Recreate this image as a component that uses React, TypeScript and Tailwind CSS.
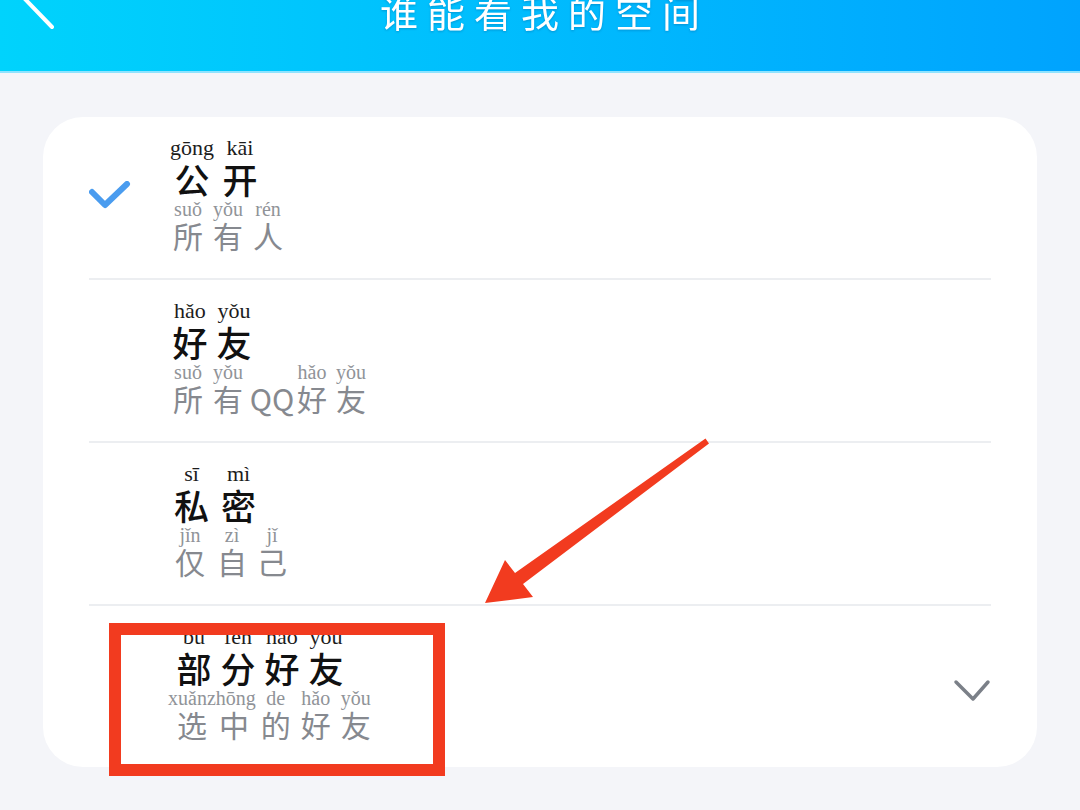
type Char = { c: string; w: string };
type Cell = { py?: string; chars: Char[] };
type Row = { main: Cell[]; sub: Cell[]; mainShift?: string; checked?: boolean; expand?: boolean };

const PY = "font-['Liberation_Serif',serif]";
const HZ = "font-['Noto_Sans_CJK_SC','Noto_Sans',sans-serif]";

const rows: Row[] = [
  {
    checked: true,
    main: [
      { py: "gōng", chars: [{ c: "公", w: "w-[48px]" }] },
      { py: "kāi", chars: [{ c: "开", w: "w-[48px]" }] },
    ],
    sub: [
      { py: "suǒ", chars: [{ c: "所", w: "w-[40px]" }] },
      { py: "yǒu", chars: [{ c: "有", w: "w-[40px]" }] },
      { py: "rén", chars: [{ c: "人", w: "w-[40px]" }] },
    ],
  },
  {
    main: [
      { py: "hǎo", chars: [{ c: "好", w: "w-[44px]" }] },
      { py: "yǒu", chars: [{ c: "友", w: "w-[44px]" }] },
    ],
    sub: [
      { py: "suǒ", chars: [{ c: "所", w: "w-[40px]" }] },
      { py: "yǒu", chars: [{ c: "有", w: "w-[40px]" }] },
      { chars: [{ c: "QQ", w: "w-[48px]" }] },
      { py: "hǎo", chars: [{ c: "好", w: "w-[32px]" }] },
      { py: "yǒu", chars: [{ c: "友", w: "w-[46px]" }] },
    ],
  },
  {
    main: [
      { py: "sī", chars: [{ c: "私", w: "w-[47px]" }] },
      { py: "mì", chars: [{ c: "密", w: "w-[47px]" }] },
    ],
    sub: [
      { py: "jǐn", chars: [{ c: "仅", w: "w-[44px]" }] },
      { py: "zì", chars: [{ c: "自", w: "w-[40px]" }] },
      { py: "jǐ", chars: [{ c: "己", w: "w-[40px]" }] },
    ],
  },
  {
    expand: true,
    mainShift: "ml-[4px]",
    main: [
      { py: "bu", chars: [{ c: "部", w: "w-[44px]" }] },
      { py: "fen", chars: [{ c: "分", w: "w-[44px]" }] },
      { py: "hao", chars: [{ c: "好", w: "w-[44px]" }] },
      { py: "you", chars: [{ c: "友", w: "w-[44px]" }] },
    ],
    sub: [
      { py: "xuǎnzhōng", chars: [{ c: "选", w: "w-[44px]" }, { c: "中", w: "w-[40px]" }] },
      { py: "de", chars: [{ c: "的", w: "w-[40px]" }] },
      { py: "hǎo", chars: [{ c: "好", w: "w-[40px]" }] },
      { py: "yǒu", chars: [{ c: "友", w: "w-[40px]" }] },
    ],
  },
];

function Annotated({ cells, big, className = "" }: { cells: Cell[]; big: boolean; className?: string }) {
  return (
    <div className={`flex ${className}`}>
      {cells.map((cell, i) => (
        <div key={i} className="flex flex-col items-center">
          <div
            className={`${PY} whitespace-nowrap ${
              big ? "text-[22px] leading-[24px] text-[#1c1c1c]" : "text-[20px] leading-[22px] text-[#909398]"
            }`}
          >
            {cell.py ?? "\u00a0"}
          </div>
          <div className="flex">
            {cell.chars.map((ch) => (
              <span
                key={ch.c}
                className={`${HZ} ${ch.w} text-center ${
                  big
                    ? "text-[35px] leading-[38px] font-medium text-[#111]"
                    : "text-[30px] leading-[30px] text-[#86898f]"
                }`}
              >
                {ch.c}
              </span>
            ))}
          </div>
        </div>
      ))}
    </div>
  );
}

export default function App() {
  return (
    <div className="relative w-[1080px] h-[810px] overflow-hidden bg-[#f4f5f9]">
      {/* header */}
      <div className="h-[73px] grid grid-cols-[1fr_auto_1fr] overflow-hidden bg-linear-to-r from-[#00d3fc] to-[#00a3fe] border-b-2 border-[#8fe3ff]">
        <div>
          <svg width="60" height="40" viewBox="0 0 60 40" className="overflow-visible">
            <polyline points="52,-30 24,-2 52,27" fill="none" stroke="#fff" strokeWidth="4" strokeLinecap="round" strokeLinejoin="round" />
          </svg>
        </div>
        <div
          className={`${HZ} -mt-[8px] pl-[9px] text-[38px] leading-[38px] tracking-[9px] text-white drop-shadow-[0_1px_1px_rgba(0,80,140,0.35)]`}
        >
          谁能看我的空间
        </div>
        <div />
      </div>

      {/* options card */}
      <div className="mx-[43px] mt-[44px] bg-white rounded-[40px] px-[46px]">
        {rows.map((row, i) => (
          <div key={i}>
            {i > 0 && <div className="h-[2px] bg-[#eceef1]" />}
            <div className="h-[161px] flex">
              <div className="w-[79px] flex items-center">
                {row.checked && (
                  <svg width="42" height="32" viewBox="0 0 42 32" className="mt-[-2px]">
                    <polyline points="3,11 16,24 38,3" fill="none" stroke="#4a9cef" strokeWidth="6" strokeLinecap="round" strokeLinejoin="round" />
                  </svg>
                )}
              </div>
              <div className="flex-1 pt-[19px]">
                <Annotated cells={row.main} big className={row.mainShift} />
                <Annotated cells={row.sub} big={false} />
              </div>
              {row.expand && (
                <div className="flex items-center pt-[8px]">
                  <svg width="38" height="24" viewBox="0 0 38 24">
                    <polyline points="3,3 20,20 35,3" fill="none" stroke="#7b8088" strokeWidth="3.5" strokeLinecap="round" strokeLinejoin="round" />
                  </svg>
                </div>
              )}
            </div>
          </div>
        ))}
      </div>

      {/* annotation overlay */}
      <div className="absolute left-[109px] top-[623px] w-[336px] h-[153px] border-[12px] border-[#f23b1f]" />
      <svg className="absolute left-0 top-0 pointer-events-none" width="1080" height="810" viewBox="0 0 1080 810">
        <polygon
          points="705.5,438.5 709,443.5 523,584 533,597 485,603 505,560 515,573"
          fill="#f23b1f"
        />
      </svg>
    </div>
  );
}
